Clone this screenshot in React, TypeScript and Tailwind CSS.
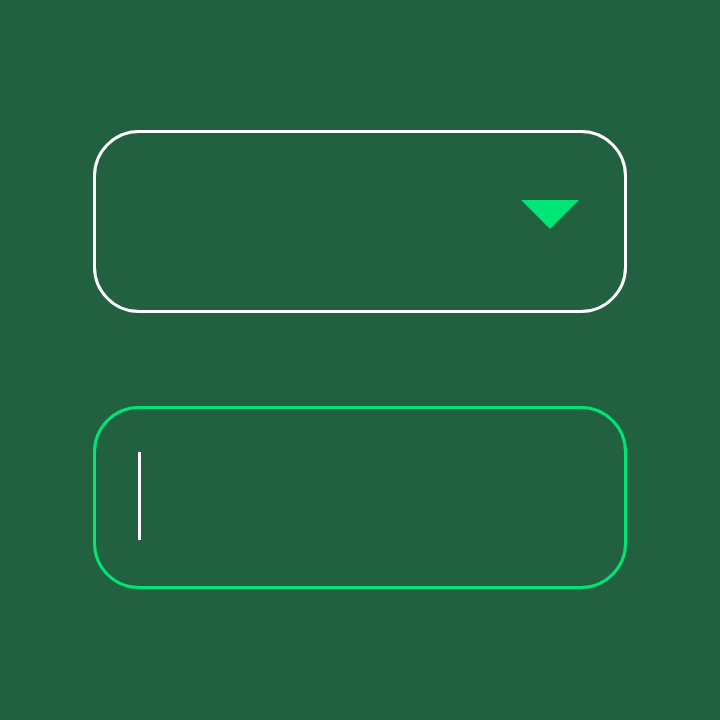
export default function App() {
  return (
    <div className="w-[720px] h-[720px] bg-[#216140] flex flex-col items-center pt-[130px] gap-[93px]">
      <div className="w-[534px] h-[183px] rounded-[46px] border-[3px] border-white flex items-center justify-end pr-[45px]">
        <svg width="58" height="29" viewBox="0 0 58 29" className="mt-[-14px]">
          <polygon points="0,0 58,0 29,29" fill="#00e676" />
        </svg>
      </div>
      <div className="w-[534px] h-[183px] rounded-[46px] border-[3px] border-[#00e676] flex items-center pl-[42px]">
        <div className="w-[3px] h-[88px] bg-white mt-[-4px]" />
      </div>
    </div>
  )
}
